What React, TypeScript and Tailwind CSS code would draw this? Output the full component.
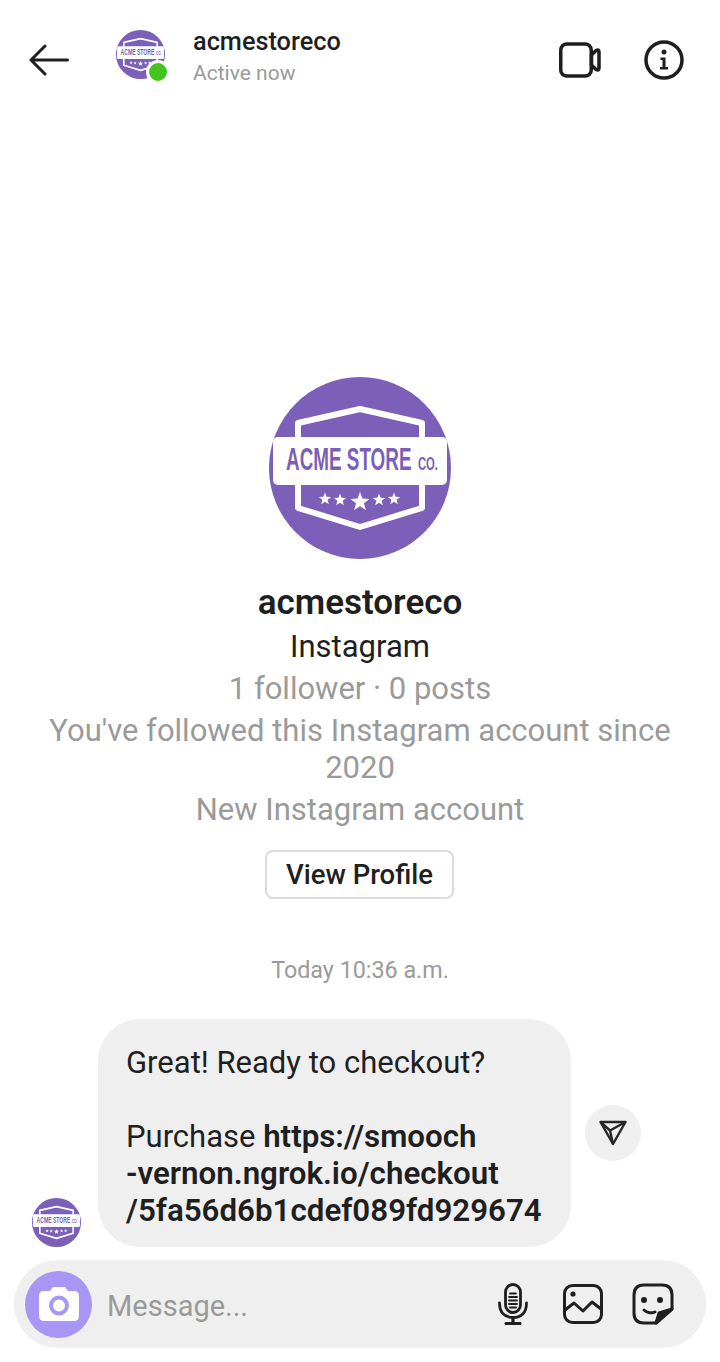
function Star({ cx, cy, r }: { cx: number; cy: number; r: number }) {
  const pts = Array.from({ length: 10 }, (_, i) => {
    const rad = i % 2 === 0 ? r : r * 0.42;
    const a = -Math.PI / 2 + (i * Math.PI) / 5;
    return `${cx + rad * Math.cos(a)},${cy + rad * Math.sin(a)}`;
  }).join(" ");
  return <polygon points={pts} fill="#fff" />;
}

function AcmeLogo({ className }: { className: string }) {
  return (
    <svg viewBox="0 0 182 182" className={className}>
      <circle cx="91" cy="91" r="91" fill="#7b5fb8" />
      <path
        d="M29 62V46L91 32L153 46V62M29 106V131L91 150L153 131V106"
        fill="none"
        stroke="#fff"
        strokeWidth="6"
        strokeLinejoin="round"
      />
      <rect x="4" y="60" width="174" height="48" rx="5" fill="#fff" />
      <text
        transform="translate(17 93) scale(0.59 1)"
        fill="#7b5fb8"
        fontFamily="'Liberation Sans', sans-serif"
        fontWeight="700"
        fontSize="32"
      >
        ACME STORE
      </text>
      <text
        transform="translate(149 93) scale(0.625 1)"
        fill="#7b5fb8"
        fontFamily="'Liberation Sans', sans-serif"
        fontWeight="700"
        fontSize="18"
      >
        CO.
      </text>
      <Star cx={56} cy={122} r={6.500} />
      <Star cx={71} cy={123} r={6.500} />
      <Star cx={91} cy={125} r={10} />
      <Star cx={110} cy={123} r={6.500} />
      <Star cx={125} cy={122} r={6.500} />
    </svg>
  );
}

function BackArrow() {
  return (
    <svg viewBox="0 0 40 32" className="w-10 h-8" fill="none" stroke="#1f1f1f" strokeWidth="3" strokeLinecap="round" strokeLinejoin="round">
      <path d="M2 16H38.500M16 2L2 16L16 30" />
    </svg>
  );
}

function VideoIcon() {
  return (
    <svg viewBox="0 0 44 36" className="w-11 h-9" fill="none" stroke="#1f1f1f" strokeWidth="3.500" strokeLinejoin="round">
      <rect x="3.750" y="2" width="30.500" height="32" rx="6" />
      <path d="M34.500 13L39 8.500Q42 7 42 10V26Q42 29 39 27.500L34.500 23Z" />
    </svg>
  );
}

function InfoIcon() {
  return (
    <svg viewBox="0 0 40 40" className="w-10 h-10" fill="none">
      <circle cx="20" cy="20" r="18" stroke="#1f1f1f" strokeWidth="3.500" />
      <circle cx="20" cy="12" r="2.500" fill="#1f1f1f" />
      <path d="M16.500 17.500H21.500V27H24V29.500H16V27H18.500V20H16.500Z" fill="#1f1f1f" />
    </svg>
  );
}

function SendIcon() {
  return (
    <svg viewBox="0 0 28 26" className="w-7 h-[26px]" fill="none" stroke="#262626" strokeWidth="2.400" strokeLinejoin="round">
      <path d="M1.500 2H26.500L14 24Z" />
      <path d="M1.500 2L11 10.500L14 24M11 10.500L26.500 2" />
    </svg>
  );
}

function MicIcon() {
  return (
    <svg viewBox="0 0 30 42" className="w-[30px] h-[42px]" fill="none" stroke="#1f1f1f" strokeWidth="2.800" strokeLinecap="round">
      <rect x="7.500" y="1.500" width="15" height="28" rx="7.500" />
      <path d="M1.500 20C1.500 30 7 34.500 15 34.500C23 34.500 28.500 30 28.500 20" />
      <path d="M15 34.500V40M8 40.500H22" strokeWidth="3.200" />
      <path d="M12 10.500H18M11 14H19M11 17.500H19M11 21H19M12 24.500H18" strokeWidth="1.800" />
    </svg>
  );
}

function GalleryIcon() {
  return (
    <svg viewBox="0 0 40 40" className="w-10 h-10" fill="none" stroke="#1f1f1f" strokeWidth="3" strokeLinejoin="round">
      <rect x="1.500" y="1.500" width="37" height="37" rx="8" />
      <circle cx="10" cy="10" r="2.600" fill="#1f1f1f" stroke="none" />
      <path d="M2 26L11 19L20 27L29 18L38 25" strokeLinecap="round" />
    </svg>
  );
}

function StickerIcon() {
  return (
    <svg viewBox="0 0 42 42" className="w-[42px] h-[42px]" fill="none" stroke="#1f1f1f" strokeWidth="3" strokeLinejoin="round">
      <path d="M24 40H12Q2 40 2 30V12Q2 2 12 2H30Q40 2 40 12V26Z" />
      <circle cx="12" cy="17" r="3" fill="#1f1f1f" stroke="none" />
      <circle cx="28" cy="17" r="3" fill="#1f1f1f" stroke="none" />
      <path d="M12 27C15 30 20 30.500 23 29" strokeLinecap="round" />
      <path d="M24 40L27 30L40 26Z" fill="#1f1f1f" />
    </svg>
  );
}

function CameraIcon() {
  return (
    <svg viewBox="0 0 42 36" className="w-[42px] h-9">
      <path
        d="M6 5H12L15 1H27L30 5H36Q41 5 41 10V30Q41 35 36 35H6Q1 35 1 30V10Q1 5 6 5Z"
        fill="#fff"
      />
      <circle cx="21" cy="19.500" r="8" fill="none" stroke="#a796f4" strokeWidth="4" />
    </svg>
  );
}

export default function App() {
  return (
    <div className="w-[720px] h-[1362px] bg-white overflow-hidden flex flex-col font-['Roboto',sans-serif] text-[#1f1f1f]">
      <header className="h-[120px] flex items-start pt-[30px] pl-[29px] pr-[36px] shrink-0">
        <div className="mt-[14px] shrink-0">
          <BackArrow />
        </div>
        <div className="relative ml-[47px] w-[48px] h-[48px] shrink-0">
          <AcmeLogo className="w-[49px] h-[49px]" />
          <span className="absolute left-[30px] top-[30px] w-[24px] h-[24px] rounded-full bg-[#44c51e] border-[3px] border-white" />
        </div>
        <div className="ml-[29px] flex-1">
          <p className="text-[25.300px] leading-[24px] font-medium">acmestoreco</p>
          <p className="text-[21px] leading-[24px] mt-[7px] text-[#9a9a9a]">Active now</p>
        </div>
        <div className="flex items-center gap-[43px] mt-[10px]">
          <VideoIcon />
          <InfoIcon />
        </div>
      </header>

      <section className="flex flex-col items-center text-center mt-[257px]">
        <AcmeLogo className="w-[182px] h-[182px]" />
        <h1 className="text-[35px] leading-[40px] font-semibold mt-[24px]">acmestoreco</h1>
        <p className="text-[31px] leading-[37px] mt-[5px]">Instagram</p>
        <p className="text-[31px] leading-[37px] mt-[5px] text-[#9a9a9a]">1 follower · 0 posts</p>
        <p className="text-[31px] leading-[37px] mt-[5px] text-[#9a9a9a] w-[640px]">
          You've followed this Instagram account since 2020
        </p>
        <p className="text-[31px] leading-[37px] mt-[5px] text-[#9a9a9a]">New Instagram account</p>
        <button
          type="button"
          className="mt-[22px] mr-[1px] w-[189px] h-[49px] rounded-[8px] border-2 border-[#dcdcdc] text-[27.500px] font-medium leading-none"
        >
          View Profile
        </button>
        <p className="text-[23.300px] leading-[28px] mt-[57px] text-[#9a9a9a]">Today 10:36 a.m.</p>
      </section>

      <section className="flex items-end mt-[35px] pl-[32px]">
        <AcmeLogo className="w-[49px] h-[49px] shrink-0" />
        <div className="ml-[17px] w-[473px] h-[228px] rounded-[42px] bg-[#efefef] pt-[25px] pl-[28px] text-[31px] leading-[37px] shrink-0">
          <p>Great! Ready to checkout?</p>
          <p className="mt-[37px]">
            Purchase <span className="font-semibold text-[31.300px]">https://smooch</span>
          </p>
          <p className="font-semibold text-[31.300px]">-vernon.ngrok.io/checkout</p>
          <p className="font-semibold text-[31.300px]">/5fa56d6b1cdef089fd929674</p>
        </div>
        <div className="ml-[14px] mb-[86px] w-[56px] h-[56px] rounded-full bg-[#efefef] flex items-center justify-center shrink-0">
          <SendIcon />
        </div>
      </section>

      <footer className="mt-[13px] ml-[14px] w-[692px] h-[88px] rounded-[44px] bg-[#efefef] flex items-center pl-[11px] pr-[32px] shrink-0">
        <div className="w-[67px] h-[67px] rounded-full bg-[#a796f4] flex items-center justify-center shrink-0">
          <CameraIcon />
        </div>
        <span className="ml-[15px] mt-[6px] text-[29px] text-[#9a9a9a] flex-1">Message...</span>
        <div className="flex items-center">
          <MicIcon />
          <div className="ml-[35px]">
            <GalleryIcon />
          </div>
          <div className="ml-[29px]">
            <StickerIcon />
          </div>
        </div>
      </footer>
    </div>
  );
}
